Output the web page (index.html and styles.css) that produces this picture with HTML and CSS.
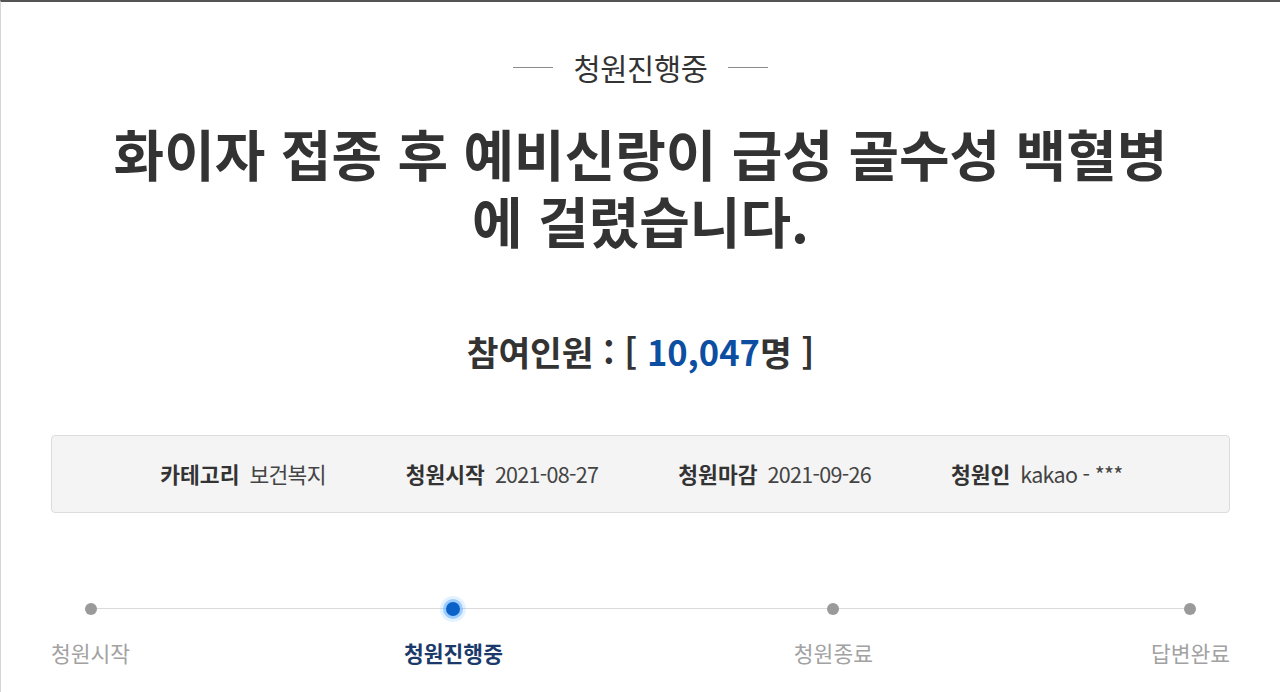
FILE: index.html
```html
<!DOCTYPE html>
<html lang="ko">
<head>
<meta charset="utf-8">
<title>청원진행중</title>
<link rel="stylesheet" href="styles.css">
</head>
<body>
<main class="page">
  <div class="status"><span class="status-line"></span><span class="status-text">청원진행중</span><span class="status-line"></span></div>
  <h1 class="title"><span class="title-line">화이자 접종 후 예비신랑이 급성 골수성 백혈병</span><span class="title-line">에 걸렸습니다.</span></h1>
  <p class="count">참여인원 : [ <span class="count-num">10,047</span>명 ]</p>
  <ul class="info">
    <li class="info-item"><span class="info-label">카테고리</span><span class="info-value">보건복지</span></li>
    <li class="info-item"><span class="info-label">청원시작</span><span class="info-value">2021-08-27</span></li>
    <li class="info-item"><span class="info-label">청원마감</span><span class="info-value">2021-09-26</span></li>
    <li class="info-item"><span class="info-label">청원인</span><span class="info-value">kakao - ***</span></li>
  </ul>
  <ol class="steps">
    <li class="step"><span class="dot"></span><span class="step-label">청원시작</span></li>
    <li class="step step-active"><span class="dot"></span><span class="step-label">청원진행중</span></li>
    <li class="step step-third"><span class="dot"></span><span class="step-label">청원종료</span></li>
    <li class="step"><span class="dot"></span><span class="step-label">답변완료</span></li>
  </ol>
</main>
</body>
</html>
```
FILE: styles.css
```css
* { box-sizing: border-box; }
html, body { margin: 0; padding: 0; }
body {
  background: #fff;
  border-top: 2px solid #555;
  border-left: 1px solid #d6d6d6;
  min-height: 692px;
  font-family: "Noto Sans CJK KR", "Noto Sans", sans-serif;
  color: #333;
}
.page {
  padding: 47px 50px 0 50px;
}
.status {
  display: flex;
  justify-content: center;
  align-items: center;
  gap: 20px;
  height: 36px;
}
.status-line {
  width: 40px;
  height: 1px;
  background: #8a8a8a;
}
.status-text {
  font-size: 29.5px;
  line-height: 36px;
  font-weight: 400;
  color: #333;
  letter-spacing: -0.3px;
}
.title {
  margin: 34px 0 0 0;
  display: flex;
  flex-direction: column;
  align-items: center;
  text-align: center;
  font-size: 55px;
  line-height: 67px;
  font-weight: 700;
  color: #333;
}
.title-line {
  display: block;
  height: 67px;
}
.count {
  margin: 76px 0 0 0;
  text-align: center;
  font-size: 34.5px;
  line-height: 44px;
  font-weight: 700;
  color: #333;
}
.count-num { color: #0b4ea2; }
.info {
  list-style: none;
  margin: 62px 0 0 0;
  padding: 0;
  height: 78px;
  background: #f4f4f4;
  border: 1px solid #dcdcdc;
  border-radius: 4px;
  display: flex;
  justify-content: center;
  align-items: center;
  gap: 80px;
  padding-left: 2px;
}
.info-item {
  display: flex;
  align-items: center;
  gap: 10px;
  font-size: 21.5px;
  line-height: 30px;
}
.info-label { font-weight: 700; color: #333; }
.info-value { font-weight: 400; color: #444; letter-spacing: -0.7px; }
.steps {
  list-style: none;
  margin: 86px 0 0 0;
  padding: 0;
  display: flex;
  justify-content: space-between;
  position: relative;
}
.steps::before {
  content: "";
  position: absolute;
  left: 39px;
  right: 39px;
  top: 9px;
  height: 1px;
  background: #dadada;
}
.step {
  display: flex;
  flex-direction: column;
  align-items: center;
  gap: 20px;
  position: relative;
}
.dot {
  width: 12px;
  height: 12px;
  margin: 4px 0;
  border-radius: 50%;
  background: #9a9a9a;
}
.step-label {
  font-size: 21.5px;
  line-height: 28px;
  color: #a2a2a2;
}
.step-active { margin-right: 17px; }
.step-third { margin-right: 4px; }
.step-active .dot {
  width: 14px;
  height: 14px;
  margin: 3px 0;
  background: #0a62c9;
  box-shadow: 0 0 0 3px rgba(70, 160, 255, 0.45), 0 0 0 6px rgba(120, 190, 255, 0.2);
}
.step-active .step-label {
  color: #1b3a6b;
  font-weight: 700;
}
```
